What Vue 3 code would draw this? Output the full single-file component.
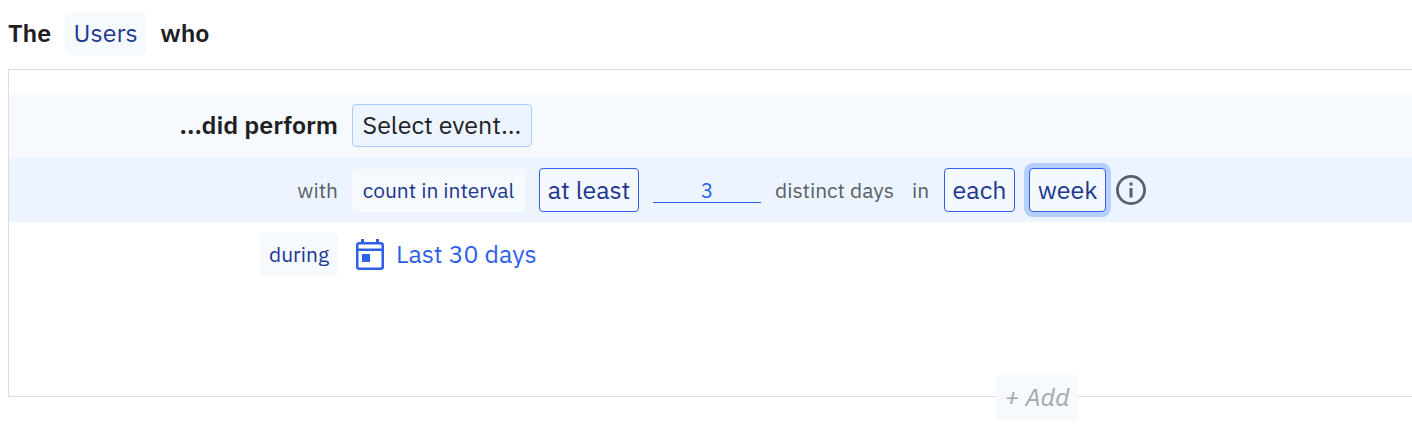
<script setup>
import { ref } from 'vue'

const days = ref('3')
</script>

<template>
  <main class="builder">
    <header class="subject">
      <span class="strong">The</span>
      <button type="button" class="chip users">Users</button>
      <span class="strong">who</span>
    </header>

    <section class="panel">
      <div class="row tint">
        <div class="lead strong">...did perform</div>
        <button type="button" class="chip event">Select event...</button>
      </div>

      <div class="row deep">
        <div class="lead small">with</div>
        <button type="button" class="chip small-chip count">count in interval</button>
        <button type="button" class="chip outlined least">at least</button>
        <input v-model="days" class="days" type="text" inputmode="numeric" aria-label="Distinct days" />
        <span class="small distinct">distinct days</span>
        <span class="small in">in</span>
        <button type="button" class="chip outlined each">each</button>
        <div class="interval">
          <button type="button" class="chip outlined active week">week</button>
          <svg class="info" viewBox="0 0 30 30" role="img" aria-label="Information">
            <circle cx="15" cy="15" r="13.6" fill="none" stroke="currentColor" stroke-width="2.8" />
            <path d="M13.5 7.5h3v3h-3zM13.5 13h3v9.5h-3z" fill="currentColor" />
          </svg>
        </div>
      </div>

      <div class="row">
        <div class="lead">
          <button type="button" class="chip small-chip during">during</button>
        </div>
        <button type="button" class="range">
          <svg class="calendar" viewBox="0 0 28 31" aria-hidden="true">
            <path d="M5 0h3v4H5zM20 0h3v4h-3z" fill="currentColor" />
            <rect x="1.25" y="4.25" width="25.5" height="25.5" rx="2" fill="none" stroke="currentColor" stroke-width="2.5" />
            <path d="M2 9.5h24V12H2zM6 15h8v8H6z" fill="currentColor" />
          </svg>
          <span>Last 30 days</span>
        </button>
      </div>

      <button type="button" class="chip add">+ Add</button>
    </section>
  </main>
</template>

<style>
body {
  margin: 0;
  background: #fff;
}
</style>

<style scoped>
.builder {
  padding: 12px 0 36px 8px;
  overflow: hidden;
  font-family: "IBM Plex Sans", "Noto Sans", sans-serif;
  font-size: 25px;
  line-height: 32px;
  color: #1e2024;
}

.builder * {
  box-sizing: border-box;
}

button,
input {
  margin: 0;
  font: inherit;
}

button {
  cursor: pointer;
}

.subject {
  display: flex;
  align-items: center;
  gap: 14px;
  height: 43px;
}

.strong {
  padding-bottom: 2px;
  font-weight: 600;
}

.chip {
  flex: none;
  height: 43px;
  padding: 0 0 2px;
  border: 1px solid transparent;
  border-radius: 4px;
  background: #f6faff;
  color: #1e3791;
  text-align: center;
  white-space: nowrap;
}

.panel {
  position: relative;
  min-height: 328px;
  margin-top: 14px;
  padding-top: 23px;
  border: 1px solid #dcdde0;
  border-right: 0;
}

.row {
  display: flex;
  align-items: center;
  gap: 14px;
  height: 64px;
  white-space: nowrap;
}

.tint {
  height: 65px;
  background: #f6faff;
}

.deep {
  background: #ecf5ff;
}

.lead {
  flex: none;
  width: 329px;
  text-align: right;
}

.small,
.small-chip {
  padding-bottom: 0;
  font-size: 21px;
}

.small {
  color: #5a5e69;
}

.users {
  width: 81px;
}

.event {
  width: 180px;
  border-color: #adcbff;
  background: #ecf5ff;
  color: #1e2024;
}

.count {
  width: 173px;
}

.outlined {
  height: 44px;
  padding-bottom: 0;
  border-color: #2f5fe8;
  background: #f3f9ff;
}

.least {
  width: 100px;
}

.days {
  flex: none;
  width: 108px;
  height: 26px;
  padding: 0;
  border: 0;
  border-bottom: 1px solid #2f5fe8;
  border-radius: 0;
  outline: 0;
  background: transparent;
  color: #2f5fe8;
  font-size: 21px;
  text-align: center;
}

.distinct {
  min-width: 123px;
}

.in {
  min-width: 18px;
}

.each {
  width: 71px;
}

.interval {
  display: flex;
  align-items: center;
  gap: 10px;
}

.week {
  width: 77px;
}

.active {
  box-shadow: 0 0 0 5px #b5d0fb;
}

.info {
  width: 30px;
  height: 30px;
  color: #5a5e69;
}

.during {
  width: 78px;
}

.range {
  display: flex;
  align-items: center;
  gap: 12px;
  padding: 0 4px;
  border: 0;
  background: transparent;
  color: #2f5fe8;
}

.calendar {
  width: 28px;
  height: 31px;
}

.add {
  position: absolute;
  bottom: -24px;
  left: 987px;
  width: 82px;
  height: 45px;
  color: #a5a8ad;
  font-style: italic;
}
</style>
